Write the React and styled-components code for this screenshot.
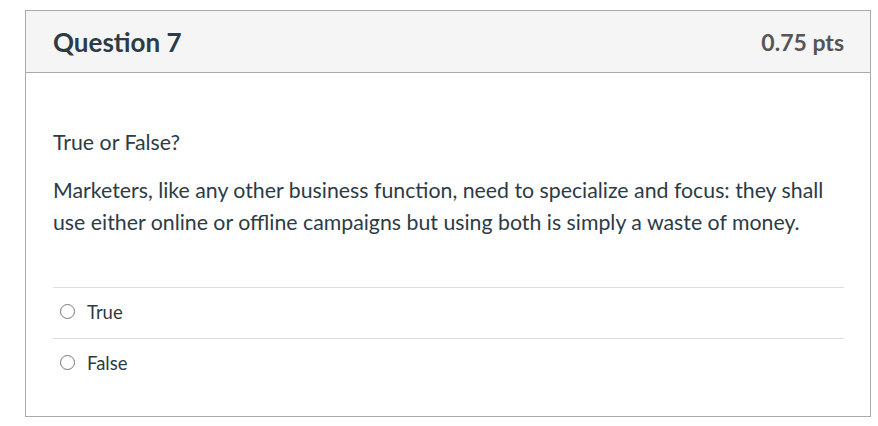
import React from 'react';
import styled, { createGlobalStyle } from 'styled-components';

const GlobalStyle = createGlobalStyle`
  html, body {
    margin: 0;
    padding: 0;
    background: #ffffff;
    font-family: Lato, "Open Sans", "Liberation Sans", sans-serif;
  }
`;

const Page = styled.div`
  padding: 10px 7px 10px 25px;
`;

const Card = styled.div`
  width: 846px;
  height: 407px;
  box-sizing: border-box;
  border: 1px solid #aaaaaa;
  background: #ffffff;
  display: flex;
  flex-direction: column;
`;

const Header = styled.div`
  height: 62px;
  box-sizing: border-box;
  background: #f5f5f5;
  border-bottom: 1px solid #aaaaaa;
  display: flex;
  align-items: center;
  justify-content: space-between;
  padding: 0 26px 0 27px;
`;

const Title = styled.h2`
  margin: 0;
  font-size: 26px;
  font-weight: 700;
  color: #2d3b45;
`;

const Points = styled.div`
  font-size: 23px;
  font-weight: 700;
  color: #555555;
`;

const Body = styled.div`
  padding: 53px 26px 0 27px;
  color: #2d3b45;
`;

const Text = styled.p`
  margin: 0 0 ${(p) => p.gap || 0}px 0;
  font-size: 21.3px;
  line-height: 32px;
`;

const Answers = styled.div`
  margin-top: 49px;
`;

const Answer = styled.label`
  display: flex;
  align-items: center;
  gap: 12px;
  height: 51px;
  box-sizing: border-box;
  padding: 0 0 3px 7px;
  border-top: 1px solid #dddddd;
  font-size: 18.5px;
  color: #2d3b45;
`;

const Radio = styled.span`
  width: 15px;
  height: 15px;
  box-sizing: border-box;
  border: 1px solid #777777;
  border-radius: 50%;
  background: #ffffff;
`;

const answers = ['True', 'False'];

const App = () => (
  <>
    <GlobalStyle />
    <Page>
      <Card>
        <Header>
          <Title>Question 7</Title>
          <Points>0.75 pts</Points>
        </Header>
        <Body>
          <Text gap={16}>True or False?</Text>
          <Text>
            Marketers, like any other business function, need to specialize and focus: they shall
            use either online or offline campaigns but using both is simply a waste of money.
          </Text>
          <Answers>
            {answers.map((a) => (
              <Answer key={a}>
                <Radio />
                {a}
              </Answer>
            ))}
          </Answers>
        </Body>
      </Card>
    </Page>
  </>
);

export default App;
